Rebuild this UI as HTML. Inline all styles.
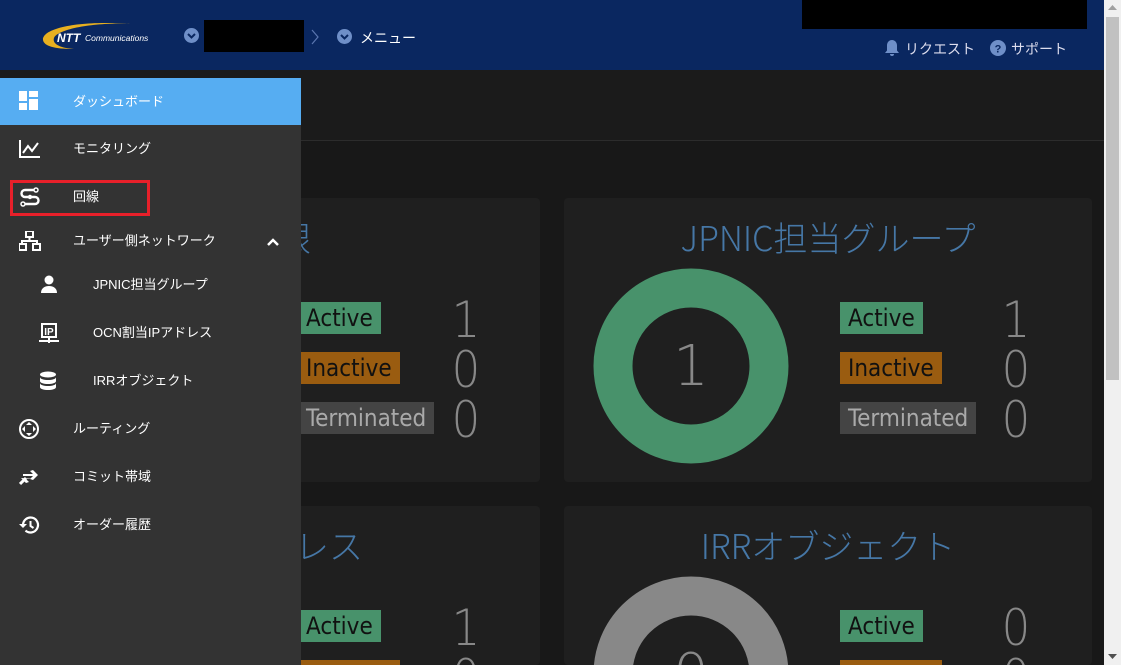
<!DOCTYPE html>
<html style="width:1121px;height:665px;overflow:hidden"><head><meta charset="utf-8"><style>
*{margin:0;padding:0;box-sizing:border-box}
body{width:1121px;height:665px;overflow:hidden;background:#181818;font-family:"Liberation Sans","Noto Sans CJK JP",sans-serif;position:relative}
.hdr{position:absolute;left:0;top:0;width:1104px;height:70px;background:#0a2760}
.abs{position:absolute}
.strip{position:absolute;left:0;top:70px;width:1104px;height:71px;background:#1b1b1b;border-bottom:1px solid #2c2c2c}
.card{position:absolute;background:#1f1f1f;border-radius:4px;width:528px;overflow:hidden}
.title{position:absolute;left:0;right:0;text-align:center;color:#4677a6;font-size:34px;font-family:"Noto Sans CJK JP",sans-serif;font-weight:300;white-space:nowrap}
.badge{position:absolute;height:32px;font-size:24px;line-height:32px;padding:0 8px;color:#111;font-family:"DejaVu Sans Condensed","Liberation Sans",sans-serif}
.g{background:#48926b}.o{background:#9a5c10}.t{background:#444;color:#aaa}
.num{position:absolute;font-size:50px;color:#888;font-family:"DejaVu Sans","Liberation Sans",sans-serif;font-weight:200;line-height:48px;transform:scaleX(0.9)}
.side{position:absolute;left:0;top:78px;width:301px;height:587px;background:#333}
.it{position:absolute;left:0;width:301px;height:40px;color:#fff;font-size:13px;line-height:40px}
.it span{position:absolute;left:73px}
.sub span{left:93px}
.it svg{position:absolute;left:19px;top:10px}
.sub svg{left:39px}
.sb{position:absolute;left:1104px;top:0;width:17px;height:665px;background:#f0f0f0}
</style></head><body>
<div class="hdr"></div>
<svg class="abs" style="left:40px;top:18px" width="120" height="34" viewBox="0 0 120 34">
<path d="M3 22 C2 10 40 2 90 6 C60 4 18 10 14 20 C12 26 20 30 34 31 C14 31 4 28 3 22Z" fill="#e8b020"/>
<text x="17" y="24" font-size="12" font-weight="bold" font-style="italic" fill="#fff" font-family="Liberation Sans">NTT</text>
<text x="45" y="23" font-size="8.5" font-style="italic" fill="#fff" font-family="Liberation Sans">Communications</text>
</svg>
<svg class="abs" style="left:184px;top:28px" width="15" height="15"><circle cx="7.5" cy="7.5" r="7.5" fill="#6f8fc8"/><path d="M4 6l3.5 3.5L11 6" stroke="#0a2760" stroke-width="2" fill="none"/></svg>
<div class="abs" style="left:204px;top:20px;width:100px;height:32px;background:#000"></div>
<svg class="abs" style="left:310px;top:29px" width="10" height="16"><path d="M2 1l6 7-6 7" stroke="#5b76b0" stroke-width="1.2" fill="none"/></svg>
<svg class="abs" style="left:337px;top:29px" width="15" height="15"><circle cx="7.5" cy="7.5" r="7.5" fill="#6f8fc8"/><path d="M4 6l3.5 3.5L11 6" stroke="#0a2760" stroke-width="2" fill="none"/></svg>
<div class="abs" style="left:360px;top:28px;color:#fff;font-size:14px">メニュー</div>
<div class="abs" style="left:802px;top:0;width:285px;height:29px;background:#000"></div>
<svg class="abs" style="left:884px;top:39px" width="16" height="18"><path d="M8 1c-3 0-5 2.5-5 5.5v5L1 14h14l-2-2.5v-5C13 3.5 11 1 8 1z M6 15h4a2 2 0 0 1-4 0z" fill="#6f8fc8"/></svg>
<div class="abs" style="left:905px;top:39px;color:#dde;font-size:14px">リクエスト</div>
<svg class="abs" style="left:990px;top:40px" width="16" height="16"><circle cx="8" cy="8" r="8" fill="#6f8fc8"/><text x="8" y="12.5" text-anchor="middle" font-size="11" font-weight="bold" fill="#0a2760" font-family="Liberation Sans">?</text></svg>
<div class="abs" style="left:1011px;top:39px;color:#dde;font-size:14px">サポート</div>

<div class="strip"></div>

<div class="card" style="left:12px;top:198px;height:284px">
<div class="title" style="top:14px;left:auto;right:229px">割当上限</div>
<div class="badge g" style="left:286px;top:104px">Active</div>
<div class="badge o" style="left:286px;top:154px">Inactive</div>
<div class="badge t" style="left:286px;top:204px">Terminated</div>
<div class="num" style="left:438px;top:98px">1</div>
<div class="num" style="left:438px;top:148px">0</div>
<div class="num" style="left:438px;top:198px">0</div>
</div>
<div class="card" style="left:564px;top:198px;height:284px">
<div class="title" style="top:14px">JPNIC担当グループ</div>
<svg class="abs" style="left:29px;top:70px" width="196" height="196"><circle cx="98" cy="98" r="78" fill="none" stroke="#48926b" stroke-width="39"/><text x="98" y="117" text-anchor="middle" font-size="56" fill="#888" font-family="DejaVu Sans" font-weight="200">1</text></svg>
<div class="badge g" style="left:276px;top:104px">Active</div>
<div class="badge o" style="left:276px;top:154px">Inactive</div>
<div class="badge t" style="left:276px;top:204px">Terminated</div>
<div class="num" style="left:436px;top:98px">1</div>
<div class="num" style="left:436px;top:148px">0</div>
<div class="num" style="left:436px;top:198px">0</div>
</div>
<div class="card" style="left:12px;top:506px;height:159px">
<div class="title" style="top:14px;left:auto;right:177px">アドレス</div>
<div class="badge g" style="left:286px;top:104px">Active</div>
<div class="badge o" style="left:286px;top:154px">Inactive</div>
<div class="num" style="left:438px;top:98px">1</div>
<div class="num" style="left:438px;top:148px">0</div>
</div>
<div class="card" style="left:564px;top:506px;height:159px">
<div class="title" style="top:14px">IRRオブジェクト</div>
<svg class="abs" style="left:29px;top:70px" width="196" height="196"><circle cx="98" cy="98" r="78" fill="none" stroke="#888" stroke-width="39"/><text x="98" y="117" text-anchor="middle" font-size="56" fill="#888" font-family="DejaVu Sans" font-weight="200">0</text></svg>
<div class="badge g" style="left:276px;top:104px">Active</div>
<div class="badge o" style="left:276px;top:154px">Inactive</div>
<div class="num" style="left:436px;top:98px">0</div>
<div class="num" style="left:436px;top:148px">0</div>
</div>

<div class="side">
<div class="it" style="top:0;height:47px;line-height:47px;background:#56adf2"><svg width="20" height="20" style="top:13px"><rect x="0" y="0" width="8" height="10" fill="#fff"/><rect x="10" y="0" width="9" height="6" fill="#fff"/><rect x="0" y="12" width="8" height="7" fill="#fff"/><rect x="10" y="8" width="9" height="11" fill="#fff"/></svg><span>ダッシュボード</span></div>
<div class="it" style="top:51px"><svg width="22" height="20"><path d="M1 1v17h20" stroke="#fff" stroke-width="2" fill="none"/><path d="M4 14l5-7 4 5 6-8" stroke="#fff" stroke-width="2" fill="none"/></svg><span>モニタリング</span></div>
<div class="it" style="top:99px"><svg width="22" height="20"><path d="M17 3H6a3.5 3.5 0 0 0 0 7h10a3.5 3.5 0 0 1 0 7H5" stroke="#fff" stroke-width="2.4" fill="none"/><circle cx="17" cy="3" r="2" fill="#333" stroke="#fff" stroke-width="1.5"/><circle cx="11" cy="10" r="2.2" fill="#fff"/><circle cx="4" cy="17" r="2" fill="#333" stroke="#fff" stroke-width="1.5"/></svg><span>回線</span></div>
<div class="it" style="top:143px"><svg width="22" height="20"><rect x="7" y="0" width="7" height="6" fill="none" stroke="#fff" stroke-width="2"/><path d="M10.5 6v4M3 13v-3h15v3" stroke="#fff" stroke-width="2" fill="none"/><rect x="0" y="13" width="7" height="6" fill="none" stroke="#fff" stroke-width="2"/><rect x="14" y="13" width="7" height="6" fill="none" stroke="#fff" stroke-width="2"/></svg><span>ユーザー側ネットワーク</span><svg width="14" height="10" style="left:266px;top:16px"><path d="M2 8l5-5 5 5" stroke="#fff" stroke-width="2.5" fill="none"/></svg></div>
<div class="it sub" style="top:187px"><svg width="22" height="20"><circle cx="10" cy="5" r="4.5" fill="#fff"/><path d="M2 18c0-5 4-7 8-7s8 2 8 7z" fill="#fff"/></svg><span>JPNIC担当グループ</span></div>
<div class="it sub" style="top:235px"><svg width="22" height="22"><rect x="3" y="1" width="14" height="13" fill="none" stroke="#fff" stroke-width="2"/><text x="10" y="12" text-anchor="middle" font-size="10" font-weight="bold" fill="#fff" font-family="Liberation Sans">IP</text><path d="M0 18h20M10 14v6" stroke="#fff" stroke-width="2"/></svg><span>OCN割当IPアドレス</span></div>
<div class="it sub" style="top:283px"><svg width="22" height="20"><ellipse cx="9" cy="3.5" rx="8" ry="3" fill="#fff"/><path d="M1 6c0 2 4 3 8 3s8-1 8-3v4c0 2-4 3-8 3s-8-1-8-3zM1 12c0 2 4 3 8 3s8-1 8-3v4c0 2-4 3-8 3s-8-1-8-3z" fill="#fff"/></svg><span>IRRオブジェクト</span></div>
<div class="it" style="top:331px"><svg width="22" height="22"><circle cx="10" cy="10" r="9" fill="none" stroke="#fff" stroke-width="2"/><path d="M10 3l3 3h-6zM10 17l3-3h-6zM3 10l3 3v-6zM17 10l-3 3v-6z" fill="#fff"/></svg><span>ルーティング</span></div>
<div class="it" style="top:379px"><svg width="22" height="20"><path d="M4 7h10l-3-3 3-1 5 5-5 5-3-1 3-3H4zM17 12H7l3 3-3 1-5-5" fill="#fff"/><path d="M1 17l6-6" stroke="#fff" stroke-width="3"/></svg><span>コミット帯域</span></div>
<div class="it" style="top:427px"><svg width="22" height="20"><path d="M4 10a7.5 7.5 0 1 1 2.5 5.6" stroke="#fff" stroke-width="2.2" fill="none"/><path d="M0 9l4 4 4-4z" fill="#fff"/><path d="M11.5 6v5l3 2" stroke="#fff" stroke-width="2" fill="none"/></svg><span>オーダー履歴</span></div>
</div>
<div class="abs" style="left:10px;top:180px;width:140px;height:36px;border:3px solid #e8202a"></div>

<div class="sb"><div style="position:absolute;left:2px;top:17px;width:13px;height:363px;background:#c1c1c1"></div>
<svg class="abs" style="left:4px;top:5px" width="9" height="6"><path d="M0 5l4.5-5 4.5 5z" fill="#a0a0a0"/></svg>
<svg class="abs" style="left:4px;top:654px" width="9" height="6"><path d="M0 0l4.5 5 4.5-5z" fill="#505050"/></svg></div>
</body></html>
